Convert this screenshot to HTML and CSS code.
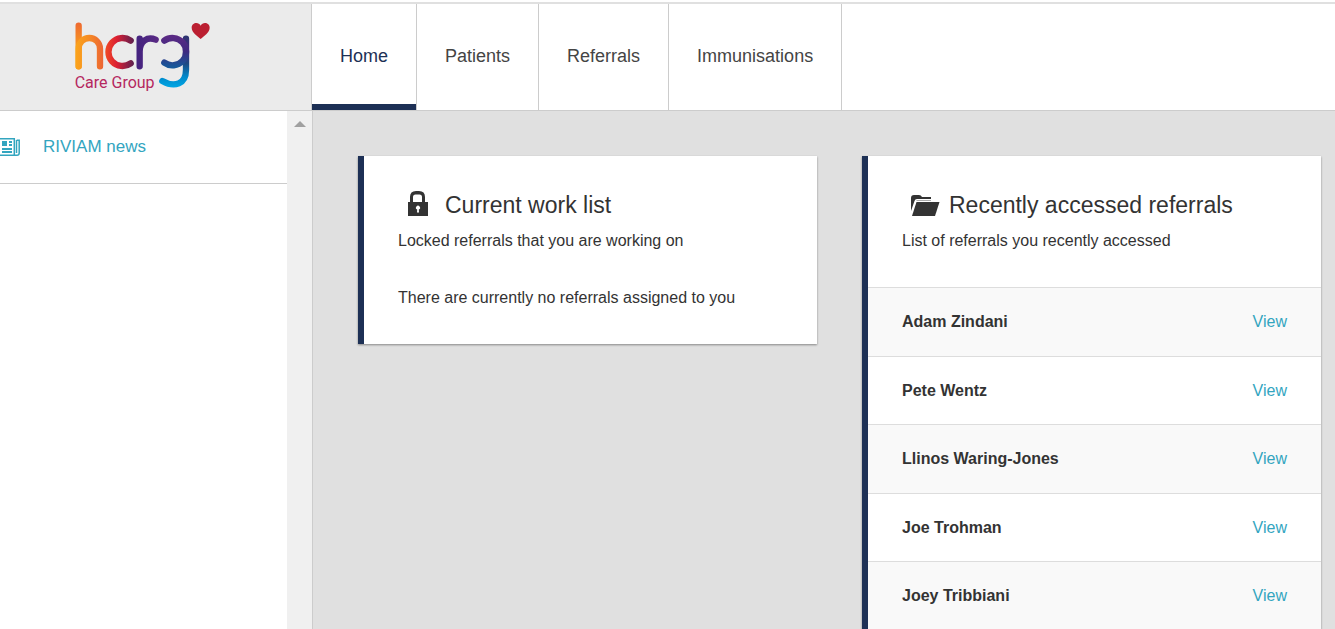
FILE: index.html
```html
<!DOCTYPE html>
<html lang="en">
<head>
    <meta charset="UTF-8">
    <title>Home</title>
    <link rel="stylesheet" href="styles.css">
</head>
<body>
<header class="header">
    <a class="logo" href="#">
        <svg width="140" height="74" viewBox="40 60 420 222" role="img" aria-label="hcrg Care Group">
            <defs>
                <linearGradient id="stem" gradientUnits="userSpaceOnUse" x1="0" y1="70" x2="0" y2="150">
                    <stop offset="0" stop-color="#ee6a30"/>
                    <stop offset="1" stop-color="#f9a11b"/>
                </linearGradient>
                <linearGradient id="arch" gradientUnits="userSpaceOnUse" x1="48" y1="0" x2="130" y2="0">
                    <stop offset="0" stop-color="#fba41a"/>
                    <stop offset="0.5" stop-color="#f58a25"/>
                    <stop offset="1" stop-color="#ec6534"/>
                </linearGradient>
                <linearGradient id="cee" gradientUnits="userSpaceOnUse" x1="137" y1="0" x2="222" y2="0">
                    <stop offset="0" stop-color="#f04a24"/>
                    <stop offset="0.4" stop-color="#dc1f32"/>
                    <stop offset="1" stop-color="#5d2050"/>
                </linearGradient>
                <linearGradient id="arr" gradientUnits="userSpaceOnUse" x1="232" y1="0" x2="297" y2="0">
                    <stop offset="0" stop-color="#44237f"/>
                    <stop offset="1" stop-color="#5a2a84"/>
                </linearGradient>
                <linearGradient id="bowl" gradientUnits="userSpaceOnUse" x1="0" y1="110" x2="0" y2="200">
                    <stop offset="0" stop-color="#5a2a84"/>
                    <stop offset="0.5" stop-color="#3e2a80"/>
                    <stop offset="1" stop-color="#17589a"/>
                </linearGradient>
                <linearGradient id="tail" gradientUnits="userSpaceOnUse" x1="0" y1="107" x2="0" y2="260">
                    <stop offset="0" stop-color="#2c3570"/>
                    <stop offset="0.3" stop-color="#43277f"/>
                    <stop offset="0.55" stop-color="#1d4a82"/>
                    <stop offset="0.8" stop-color="#0088ca"/>
                    <stop offset="1" stop-color="#00a4e2"/>
                </linearGradient>
            </defs>
            <g fill="none" stroke-width="19" stroke-linecap="round">
                <path stroke="url(#stem)" d="M57 77L57.010 199"/>
                <path stroke="url(#arch)" d="M57 199V146A32 32 0 0 1 121 146V199"/>
                <path stroke="url(#cee)" d="M213 122A42 42 0 1 0 213 190"/>
                <path stroke="url(#arr)" d="M240 116L240.010 199M240 155C240 122 264 109 288 119"/>
                <path stroke="url(#tail)" d="M379 116L379.010 209C379 252 345 264 308 243"/>
                <path stroke="url(#bowl)" d="M314 122A41 41 0 1 1 314 188"/>
            </g>
            <path fill="#bb1f31" d="M423 117C414 108 396 98 396 83C396 67 417 64 423 77C429 64 450 67 450 83C450 98 432 108 423 117Z"/>
            <text class="logo-text" x="45" y="263">Care Group</text>
        </svg>
    </a>
    <nav class="nav">
        <a class="current" href="#">Home</a>
        <a href="#">Patients</a>
        <a href="#">Referrals</a>
        <a href="#">Immunisations</a>
    </nav>
</header>
<div class="page">
    <aside class="sidebar">
        <ul class="menu">
            <li>
                <a href="#">
                    <svg width="21" height="20" viewBox="0 0 21 20" aria-hidden="true">
                        <path fill="none" stroke="currentColor" stroke-width="1.500" d="M0 1.700H14.300V18.300H0M16.700 3.200H19.200V16Q19.200 18.300 17 18.300H14M16.500 3V16"/>
                        <path fill="currentColor" d="M2 4h5v5H2zM9 4h3v2H9zM9 7h3v2H9zM2 11h10v2H2zM2 14h10v2H2z"/>
                    </svg>
                    RIVIAM news
                </a>
            </li>
        </ul>
        <div class="scroll"><span class="scroll-up"></span></div>
    </aside>
    <main class="main">
        <section class="card">
            <div class="card-head">
                <h2>
                    <svg width="30" height="28" viewBox="0 0 30 28" aria-hidden="true">
                        <path fill="#333" fill-rule="evenodd" d="M1 13H3V8Q3 2 9 2H12Q18 2 18 8V13H21V27H1ZM6 13H15V8Q15 5.500 12.500 5.500H8.500Q6 5.500 6 8ZM10 23.500H12L11.800 20.500A2 2 0 1 0 10.200 20.500Z"/>
                    </svg>
                    Current work list
                </h2>
                <p>Locked referrals that you are working on</p>
            </div>
            <p class="empty">There are currently no referrals assigned to you</p>
        </section>
        <section class="card">
            <div class="card-head">
                <h2>
                    <svg width="30" height="28" viewBox="0 0 30 28" aria-hidden="true">
                        <path fill="#333" d="M0 22V9Q0 6 3 6H8Q10 6 11 8H20V10H6Q4 10 3.500 12Z"/>
                        <path fill="#aaa" d="M6 11H20V12H5Z"/>
                        <path fill="#333" d="M5.500 13H28.500L24 27H1Z"/>
                    </svg>
                    Recently accessed referrals
                </h2>
                <p>List of referrals you recently accessed</p>
            </div>
            <table class="list">
                <tr><th scope="row">Adam Zindani</th><td><a href="#">View</a></td></tr>
                <tr><th scope="row">Pete Wentz</th><td><a href="#">View</a></td></tr>
                <tr><th scope="row">Llinos Waring-Jones</th><td><a href="#">View</a></td></tr>
                <tr><th scope="row">Joe Trohman</th><td><a href="#">View</a></td></tr>
                <tr><th scope="row">Joey Tribbiani</th><td><a href="#">View</a></td></tr>
            </table>
        </section>
    </main>
</div>
</body>
</html>
```
FILE: styles.css
```css
* {
    padding: 0;
    margin: 0;
    box-sizing: border-box;
}

body {
    display: flex;
    flex-direction: column;
    height: 100vh;
    padding-top: 2px;
    overflow: hidden;
    font-family: Arial, "Liberation Sans", sans-serif;
    font-size: 16px;
    color: #333;
    background: #fff;
}

a {
    color: #33a5bf;
    text-decoration: none;
}

.header {
    display: flex;
    flex: none;
    border-top: 2px solid #e0e0e0;
    border-bottom: 1px solid #ccc;
}

.logo {
    width: 312px;
    padding: 16px 0 16px 73px;
    background: #ebebeb;
    border-right: 1px solid #ccc;
}

.logo svg {
    display: block;
}

.logo-text {
    font-family: Roboto, sans-serif;
    font-size: 48px;
    fill: #b5285f;
}

.nav {
    display: flex;
}

.nav a {
    display: flex;
    align-items: center;
    padding: 0 28px 2px;
    border-right: 1px solid #ccc;
    font-size: 18px;
    color: #444;
}

.nav a.current {
    color: #1d3055;
    box-shadow: inset 0 -6px #1d3055;
}

.page {
    display: flex;
    flex: 1;
    min-height: 0;
}

.sidebar {
    display: flex;
    flex: none;
    width: 313px;
    border-right: 1px solid #ccc;
}

.menu {
    flex: 1;
    list-style: none;
}

.menu a {
    display: flex;
    align-items: center;
    gap: 22px;
    height: 73px;
    border-bottom: 1px solid #ccc;
    font-size: 17px;
}

.scroll {
    width: 25px;
    padding-top: 10px;
    background: #f0f0f0;
}

.scroll-up {
    display: block;
    width: 12px;
    margin: 0 auto;
    border: 6px solid transparent;
    border-top-width: 0;
    border-bottom-color: #a0a0a0;
}

.main {
    display: grid;
    flex: 1;
    grid-template-columns: 1fr 1fr;
    align-items: start;
    gap: 45px;
    padding: 45px 14px 0 45px;
    background: #e0e0e0;
    overflow: hidden;
}

.card {
    border-left: 6px solid #1d3055;
    background: #fff;
    box-shadow: 0 1px 2px rgba(0, 0, 0, 0.4);
}

.card-head {
    padding: 33px 34px 0;
}

.card h2 {
    display: flex;
    align-items: center;
    gap: 8px;
    padding-left: 9px;
    margin-bottom: 8px;
    font-size: 23px;
    font-weight: normal;
    line-height: 32px;
}

.card h2 svg {
    margin-bottom: 4px;
}

.card p {
    line-height: 24px;
}

.card .empty {
    padding: 33px 34px 34px;
}

.list {
    width: 100%;
    margin-top: 34px;
    border-collapse: collapse;
}

.list tr {
    height: 68px;
    border-top: 1px solid #ddd;
}

.list tr:nth-child(odd) {
    height: 69px;
    background: #f9f9f9;
}

.list th {
    padding-left: 34px;
    text-align: left;
}

.list td {
    padding-right: 34px;
    text-align: right;
}
```
